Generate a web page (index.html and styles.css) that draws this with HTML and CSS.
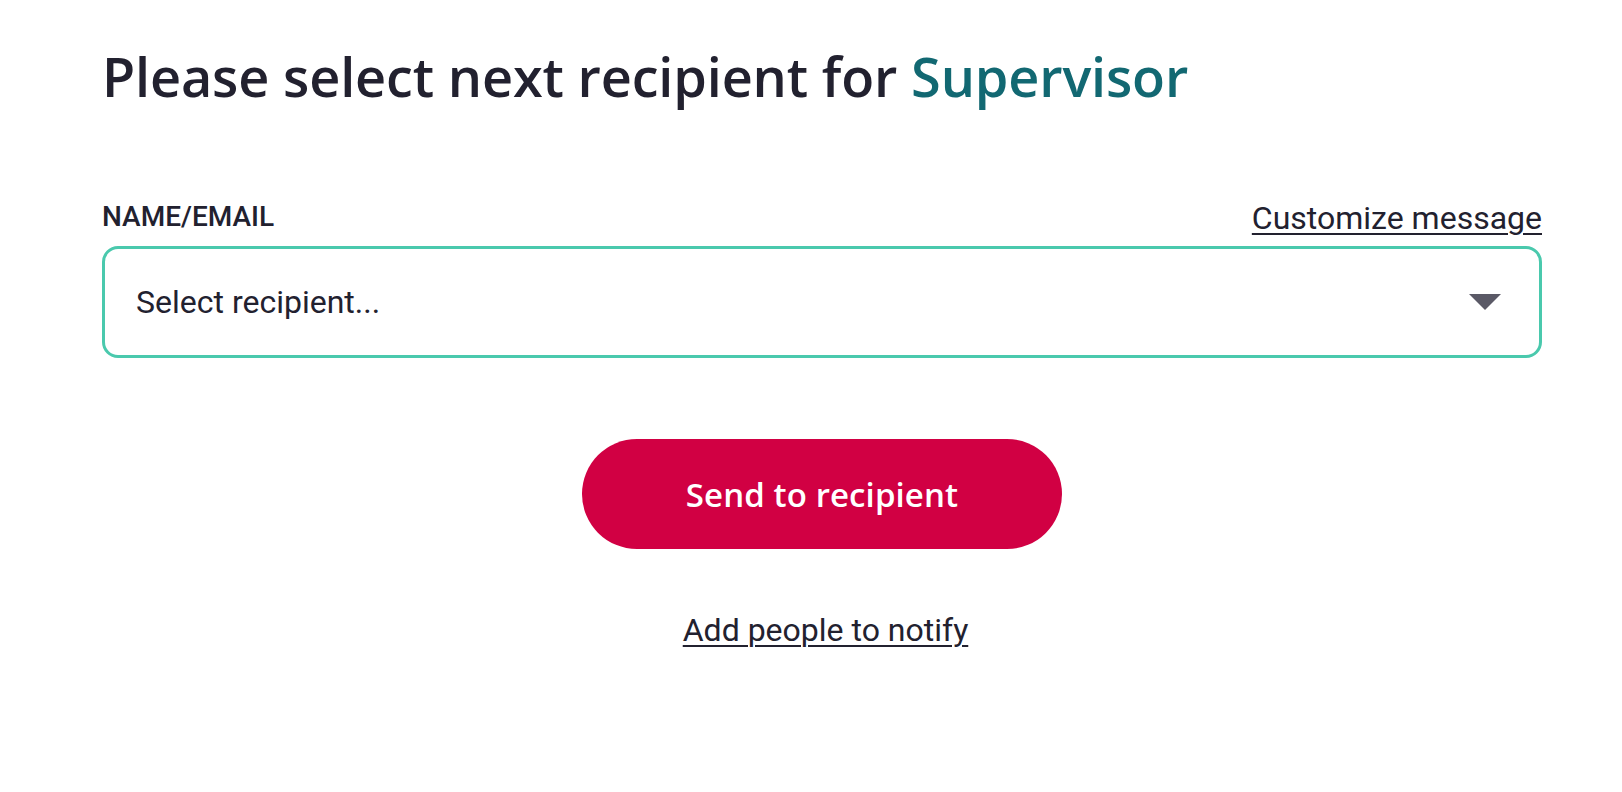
FILE: index.html
```html
<!DOCTYPE html>
<html lang="en">
<head>
<meta charset="utf-8">
<title>Select recipient</title>
<link rel="stylesheet" href="styles.css">
</head>
<body>
<main class="panel">
  <h1 class="title">Please select next recipient for <span class="role">Supervisor</span></h1>
  <div class="field-head">
    <label class="field-label" for="recipient">NAME/EMAIL</label>
    <a class="link" href="#">Customize message</a>
  </div>
  <div class="select" id="recipient">
    <span class="placeholder">Select recipient...</span>
    <svg class="caret" width="32" height="16" viewBox="0 0 32 16"><path d="M0 0 H32 L16 16 Z" fill="#5a5966"/></svg>
  </div>
  <div class="actions">
    <button class="send">Send to recipient</button>
    <a class="link notify" href="#">Add people to notify</a>
  </div>
</main>
</body>
</html>
```
FILE: styles.css
```css
html, body {
  margin: 0;
  padding: 0;
  background: #ffffff;
}
body {
  font-family: Roboto, "Liberation Sans", sans-serif;
  color: #22212f;
}
.panel {
  width: 1440px;
  margin-left: 102px;
  padding-top: 40px;
}
.title {
  margin: 0;
  font-family: "Open Sans", "Liberation Sans", sans-serif;
  font-weight: 600;
  font-size: 54px;
  line-height: 72px;
  letter-spacing: -0.15px;
  color: #22212f;
}
.role {
  color: #126872;
}
.field-head {
  display: flex;
  justify-content: space-between;
  align-items: baseline;
  margin-top: 88px;
}
.field-label {
  font-size: 28px;
  font-weight: 500;
  line-height: 32px;
  position: relative;
  top: -3px;
}
.link {
  color: #22212f;
  font-size: 32px;
  line-height: 36px;
  text-decoration: underline;
  text-decoration-thickness: 2px;
  text-underline-offset: 4px;
}
.select {
  margin-top: 10px;
  height: 106px;
  border: 3px solid #4ac9ad;
  border-radius: 16px;
  display: flex;
  align-items: center;
  justify-content: space-between;
  padding: 0 38px 0 31px;
}
.placeholder {
  font-size: 32px;
}
.caret {
  display: block;
}
.actions {
  display: flex;
  flex-direction: column;
  align-items: center;
  margin-top: 81px;
}
.send {
  width: 480px;
  height: 110px;
  border: none;
  border-radius: 55px;
  background: #d10043;
  color: #ffffff;
  font-family: "Open Sans", "Liberation Sans", sans-serif;
  font-weight: 600;
  font-size: 33px;
  letter-spacing: 0.1px;
}
.notify {
  margin-top: 63px;
  margin-left: 7px;
}
```
